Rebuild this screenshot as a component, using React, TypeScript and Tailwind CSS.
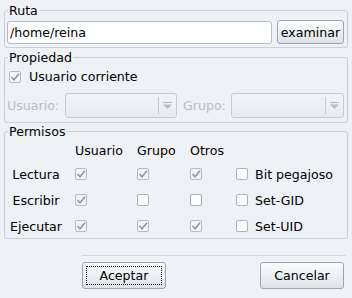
import React from "react";

function Check({ checked }: { checked?: boolean }) {
  return (
    <span
      className={
        checked
          ? "flex h-[12px] w-[12px] shrink-0 items-center justify-center rounded-[2px] border border-[#b1bac8] bg-[#f3f5f8]"
          : "flex h-[12px] w-[12px] shrink-0 items-center justify-center rounded-[2px] border border-[#a9b2c1] bg-white"
      }
    >
      {checked && (
        <svg width="10" height="10" viewBox="0 0 10 10">
          <path d="M1.5 5 L4 7.8 L9 1.8" fill="none" stroke="#8d97ab" strokeWidth="1.6" />
        </svg>
      )}
    </span>
  );
}

function Combo({ w }: { w: string }) {
  return (
    <div
      className={`flex h-[25px] ${w} items-stretch rounded-[3px] border border-[#c4cbd6] bg-gradient-to-b from-[#f3f5f8] to-[#e6eaf0]`}
    >
      <div className="flex-1" />
      <div className="my-[3px] w-px bg-[#c4cbd6]" />
      <div className="flex w-[17px] flex-col items-center justify-center">
        <svg width="9" height="8" viewBox="0 0 9 8">
          <rect x="0" y="0" width="9" height="1" fill="#b3bbc7" />
          <path d="M0 2.5 H9 L4.5 7 Z" fill="#b3bbc7" />
        </svg>
      </div>
    </div>
  );
}

export default function App() {
  const btn =
    "flex items-center justify-center rounded-[3px] border border-[#9ca5b3] bg-gradient-to-b from-[#fbfcfd] to-[#dfe3e9] text-black";
  return (
    <div className="h-[298px] w-[352px] overflow-hidden bg-[#eef1f5] px-[4px] pt-[3px] font-['DejaVu_Sans',sans-serif] text-[12.6px] leading-[15px] text-black">
      <fieldset className="rounded-[3px] border border-[#c9cfd9] pb-[3px] pl-[2px] pr-[3px]">
        <legend className="ml-[1px] px-[1px] leading-[15px]">Ruta</legend>
        <div className="mt-[2px] flex items-center gap-[5px]">
          <div className="flex h-[23px] flex-1 items-center rounded-[3px] border border-[#b3bbc7] bg-white pl-[2px]">
            /home/reina
          </div>
          <button className={`${btn} h-[24px] w-[67px]`}>examinar</button>
        </div>
      </fieldset>

      <fieldset className="mt-[2px] rounded-[3px] border border-[#c9cfd9] pb-[4px] pl-[2px] pr-[3px]">
        <legend className="ml-[1px] px-[1px] leading-[15px]">Propiedad</legend>
        <div className="mt-[4px] flex items-center pl-[2px]">
          <Check checked />
          <span className="ml-[8px]">Usuario corriente</span>
        </div>
        <div className="mt-[9px] flex items-center">
          <span className="w-[58px] text-[#b6bdc9]">Usuario:</span>
          <Combo w="w-[112px]" />
          <span className="ml-[6px] w-[48px] text-[#b6bdc9]">Grupo:</span>
          <Combo w="w-[113px]" />
        </div>
      </fieldset>

      <fieldset className="mt-[1px] rounded-[3px] border border-[#c9cfd9] pb-[3px] pl-[2px] pr-[3px]">
        <legend className="ml-[1px] px-[1px] leading-[15px]">Permisos</legend>
        <div className="mt-[4px] grid grid-cols-[68px_62px_53px_46px_1fr] gap-y-[8px]">
          <div />
          <div className="leading-[15px]">Usuario</div>
          <div className="leading-[15px]">Grupo</div>
          <div className="leading-[15px]">Otros</div>
          <div />
          {[
            ["Lectura", true, true, true, "Bit pegajoso"],
            ["Escribir", true, false, false, "Set-GID"],
            ["Ejecutar", true, true, true, "Set-UID"],
          ].map(([label, a, b, c, sp], i) => (
            <React.Fragment key={i}>
              <div className={`flex h-[18px] items-center justify-center pr-[10px] ${i === 0 ? "mt-[-1px]" : ""}`}>
                {label as string}
              </div>
              <div className={`flex h-[18px] items-center ${i === 0 ? "mt-[-1px]" : ""}`}>
                <Check checked={a as boolean} />
              </div>
              <div className={`flex h-[18px] items-center ${i === 0 ? "mt-[-1px]" : ""}`}>
                <Check checked={b as boolean} />
              </div>
              <div className={`flex h-[18px] items-center ${i === 0 ? "mt-[-1px]" : ""}`}>
                <Check checked={c as boolean} />
              </div>
              <div className={`flex h-[18px] items-center ${i === 0 ? "mt-[-1px]" : ""}`}>
                <Check />
                <span className="ml-[7px]">{sp as string}</span>
              </div>
            </React.Fragment>
          ))}
        </div>
      </fieldset>

      <div className="ml-[78px] mr-[2px] mt-[16px] h-px bg-[#d3d8e0]" />
      <div className="ml-[78px] mr-[4px] mt-[6px] flex justify-between">
        <button className={`${btn} h-[27px] w-[84px] p-[3px]`}>
          <span className="flex h-full w-full items-center justify-center border border-dotted border-black">
            Aceptar
          </span>
        </button>
        <button className={`${btn} h-[27px] w-[84px]`}>Cancelar</button>
      </div>
    </div>
  );
}
